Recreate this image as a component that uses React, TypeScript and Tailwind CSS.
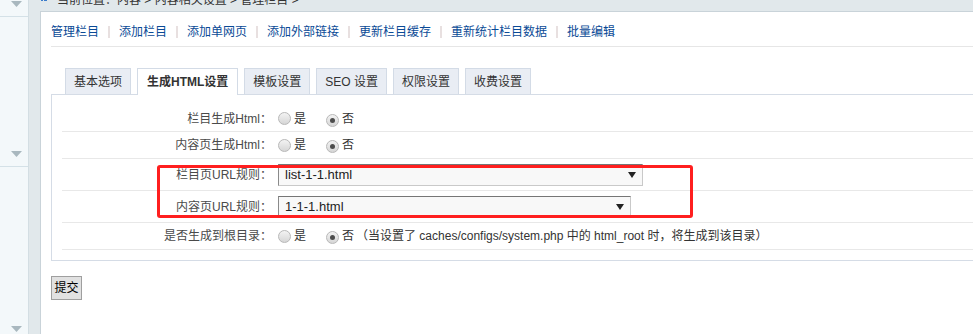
import React from "react";

function Arrow() {
  return (
    <svg width="11" height="6" viewBox="0 0 11 6" className="block">
      <polygon points="0,0 11,0 5.5,6" fill="#a9b8bf" />
    </svg>
  );
}

function Radio({ checked }: { checked?: boolean }) {
  return (
    <span className="inline-flex w-[13px] h-[13px] rounded-full border border-[#b8b8b8] bg-linear-to-b from-[#f3f3f3] to-[#d6d6d6] items-center justify-center shrink-0">
      {checked && <span className="block w-[5px] h-[5px] rounded-full bg-[#4d4d4d]" />}
    </span>
  );
}

function YesNo({ children }: { children?: React.ReactNode }) {
  return (
    <div className="flex items-center text-[12px] text-[#333] pl-[6px]">
      <Radio />
      <span className="ml-[3px]">是</span>
      <span className="ml-[20px]">
        <Radio checked />
      </span>
      <span className="ml-[3px]">否</span>
      {children}
    </div>
  );
}

function SelectBox({ className, value }: { className: string; value: string }) {
  return (
    <div
      className={
        "h-[22px] flex items-center justify-between bg-[#f8f8f8] border border-t-[#767676] border-l-[#8a8a8a] border-r-[#c9c9c9] border-b-[#c9c9c9] pl-[6px] pr-[6px] font-['Liberation_Sans',sans-serif] text-[13px] text-[#222] " +
        className
      }
    >
      <span>{value}</span>
      <svg width="8" height="6" viewBox="0 0 8 6" className="block">
        <polygon points="0,0 8,0 4,6" fill="#222" />
      </svg>
    </div>
  );
}

function Row({ h, label, children }: { h: string; label: string; children: React.ReactNode }) {
  return (
    <div className={"flex items-center border-b border-[#e8e8e8] " + h}>
      <div className="w-[210px] shrink-0 text-right text-[12px] text-[#4a4a4a]">{label}</div>
      {children}
    </div>
  );
}

export default function App() {
  const links = ["管理栏目", "添加栏目", "添加单网页", "添加外部链接", "更新栏目缓存", "重新统计栏目数据", "批量编辑"];
  const tabs = ["基本选项", "生成HTML设置", "模板设置", "SEO 设置", "权限设置", "收费设置"];
  return (
    <div className="relative flex w-[973px] h-[334px] overflow-hidden bg-white font-['Liberation_Sans','Noto_Sans_CJK_SC',sans-serif]">
      {/* sidebar */}
      <div className="w-[29px] shrink-0 bg-[#f3f8fa] border-r border-[#d3dee3] flex flex-col">
        <div className="h-[17px] shrink-0 border-b border-[#d4e1e7] pl-[11px] pt-[1px]">
          <Arrow />
        </div>
        <div className="h-[150px] shrink-0 border-b border-[#d4e1e7] flex flex-col justify-end pl-[11px] pb-[9px]">
          <Arrow />
        </div>
        <div className="flex-1 flex flex-col justify-end pl-[11px] pb-[2px]">
          <Arrow />
        </div>
      </div>

      {/* right area */}
      <div className="flex-1 min-w-0 bg-[#e1e8eb] pl-[11px] flex flex-col">
        {/* breadcrumb (cut off) */}
        <div className="h-[11px] shrink-0 overflow-hidden">
          <div className="-mt-[10px] h-[20px] flex items-center text-[12px] leading-[20px] text-[#333]">
            <span className="flex gap-[1px] mt-[-4px] ml-[1px]">
              <span className="block w-[2px] h-[6px] bg-[#3b7ccb]" />
              <span className="block w-[3px] h-[6px] bg-[#3b7ccb]" />
            </span>
            <span className="ml-[10px] whitespace-nowrap">当前位置：内容 &gt; 内容相关设置 &gt; 管理栏目 &gt;</span>
          </div>
        </div>

        {/* main white box */}
        <div className="flex-1 bg-white border-l border-t border-[#c9d3d9] pl-[10px] flex flex-col">
          {/* nav */}
          <div className="pt-[10px] pb-[4px] border-b border-[#e6e6e6] flex items-center text-[12px] leading-[20px] text-[#0a4a96]">
            {links.map((l, i) => (
              <React.Fragment key={l}>
                {i > 0 && <span className="block w-[2px] h-[12px] bg-[#e8e0e0] mx-[9px]" />}
                <span className="whitespace-nowrap">{l}</span>
              </React.Fragment>
            ))}
          </div>

          {/* tabs */}
          <div className="mt-[21px] flex items-end pl-[14px] gap-[6px]">
            {tabs.map((t, i) =>
              i === 1 ? (
                <div
                  key={t}
                  className="relative z-10 h-[27px] -mb-px px-[9px] bg-white border border-b-0 border-[#d3dbe6] flex items-center text-[12px] font-bold text-[#333] whitespace-nowrap"
                >
                  {t}
                </div>
              ) : (
                <div
                  key={t}
                  className="h-[26px] px-[8px] bg-[#e9edf4] border border-b-0 border-[#d3dbe6] flex items-center text-[12px] text-[#333] whitespace-nowrap"
                >
                  {t}
                </div>
              )
            )}
          </div>

          {/* panel */}
          <div className="border border-r-0 border-[#d5dce6] pt-[11px] pb-[10px] pl-[10px]">
            <Row h="h-[26px]" label="栏目生成Html：">
              <YesNo />
            </Row>
            <Row h="h-[27px]" label="内容页生成Html：">
              <YesNo />
            </Row>
            <Row h="h-[32px]" label="栏目页URL规则：">
              <div className="pl-[6px]">
                <SelectBox className="w-[365px]" value="list-1-1.html" />
              </div>
            </Row>
            <Row h="h-[32px]" label="内容页URL规则：">
              <div className="pl-[6px]">
                <SelectBox className="w-[353px]" value="1-1-1.html" />
              </div>
            </Row>
            <Row h="h-[27px]" label="是否生成到根目录：">
              <YesNo>
                <span className="ml-[2px] whitespace-nowrap">
                  （当设置了 caches/configs/system.php 中的 html_root 时，将生成到该目录）
                </span>
              </YesNo>
            </Row>
          </div>

          {/* submit */}
          <div className="mt-[15px]">
            <button className="h-[24px] w-[31px] bg-[#e1e1e1] border border-[#9f9f9f] text-[12px] text-black flex items-center justify-center">
              提交
            </button>
          </div>
        </div>
      </div>

      {/* red annotation box */}
      <div className="absolute left-[157px] top-[165px] w-[536px] h-[53px] border-[3px] border-[#ff1f1f] rounded-[3px] pointer-events-none" />
    </div>
  );
}
